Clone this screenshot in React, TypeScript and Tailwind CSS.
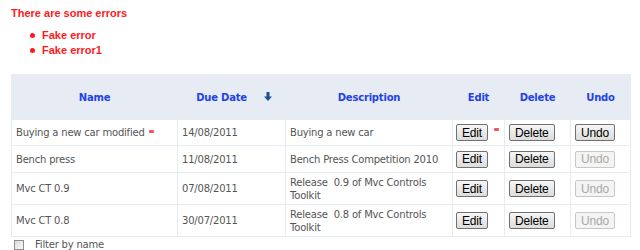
import React from "react";

const btn =
  "h-[17px] rounded-[2px] border border-[#707070] bg-gradient-to-b from-[#f6f6f6] to-[#dcdcdc] text-[12px] leading-[14px] text-black px-[5px] [font-family:'Liberation_Sans',Arial,sans-serif]";
const btnDis =
  "h-[17px] rounded-[2px] border border-[#c8c8c8] bg-[#f4f4f4] text-[12px] leading-[14px] text-[#a8a8a8] px-[5px] [font-family:'Liberation_Sans',Arial,sans-serif]";

const rows = [
  { name: "Buying a new car modified", star: true, date: "14/08/2011", desc: ["Buying a new car"], undo: true, h: "h-[26px]" },
  { name: "Bench press", star: false, date: "11/08/2011", desc: ["Bench Press Competition 2010"], undo: false, h: "h-[27px]" },
  { name: "Mvc CT 0.9", star: false, date: "07/08/2011", desc: ["Release\u00a0 0.9 of Mvc Controls", "Toolkit"], undo: false, h: "h-[32px]" },
  { name: "Mvc CT 0.8", star: false, date: "30/07/2011", desc: ["Release\u00a0 0.8 of Mvc Controls", "Toolkit"], undo: false, h: "h-[32px]" },
];

const cell = "border border-[#e7ecf4]";

function Star({ className }: { className: string }) {
  return (
    <span
      title="*"
      aria-label="*"
      className={"inline-block w-[5px] h-[3px] rounded-[1px] bg-[#ff5060] align-middle " + className}
    />
  );
}

export default function App() {
  return (
    <div className="w-[640px] h-[250px] overflow-hidden bg-white pl-[11px] pt-[6px] [font-family:'DejaVu_Sans',Verdana,sans-serif]">
      <div className="text-[11px] leading-[15px] font-bold text-[#ff1a1a] [font-family:'Liberation_Sans',Tahoma,sans-serif]">
        There are some errors
      </div>
      <ul className="mt-[7px] pl-[19px] text-[11px] leading-[15px] font-bold text-[#ff1a1a] [font-family:'Liberation_Sans',Tahoma,sans-serif]">
        <li className="flex items-center">
          <span className="w-[5px] h-[5px] rounded-full bg-[#ff1a1a] mr-[7px]" />
          Fake error
        </li>
        <li className="flex items-center">
          <span className="w-[5px] h-[5px] rounded-full bg-[#ff1a1a] mr-[7px]" />
          Fake error1
        </li>
      </ul>
      <table className="mt-[16px] w-[619px] border-collapse table-fixed text-[10px] tracking-[-0.2px] text-[#555]">
        <colgroup>
          <col className="w-[166px]" />
          <col className="w-[108px]" />
          <col className="w-[167px]" />
          <col className="w-[52px]" />
          <col className="w-[66px]" />
          <col className="w-[60px]" />
        </colgroup>
        <thead>
          <tr className="h-[45px] bg-[#e7ecf4] text-[#2142e8] font-bold">
            <th className={cell + " text-center"}>Name</th>
            <th className={cell + " text-center"}>
              <span className="inline-flex items-center pl-[5px]">
                Due Date
                <svg width="8" height="9" viewBox="0 0 8 9" className="ml-[17px] mt-[-2px]">
                  <path d="M2.5 0h3v4.5H8L4 9 0 4.5h2.5z" fill="#1f4f93" />
                </svg>
              </span>
            </th>
            <th className={cell + " text-center"}>Description</th>
            <th className={cell + " text-center"}>Edit</th>
            <th className={cell + " text-center"}>Delete</th>
            <th className={cell + " text-center"}>Undo</th>
          </tr>
        </thead>
        <tbody>
          {rows.map((r) => (
            <tr key={r.name} className={r.h}>
              <td className={cell + " pl-[4px] whitespace-nowrap"}>
                {r.name}
                {r.star && <Star className="ml-[4px] relative top-[-2px]" />}
              </td>
              <td className={cell + " pl-[4px]"}>{r.date}</td>
              <td className={cell + " pl-[4px] leading-[13px] whitespace-nowrap"}>
                {r.desc.map((d, i) => (
                  <div key={i}>{d}</div>
                ))}
              </td>
              <td className={cell + " pl-[3px] whitespace-nowrap"}>
                <div className="flex items-center">
                  <button className={btn}>Edit</button>
                  {r.star && <Star className="ml-[6px] relative top-[-3px]" />}
                </div>
              </td>
              <td className={cell + " pl-[4px]"}>
                <button className={btn}>Delete</button>
              </td>
              <td className={cell + " pl-[4px]"}>
                <button className={r.undo ? btn : btnDis}>Undo</button>
              </td>
            </tr>
          ))}
        </tbody>
      </table>
      <div className="flex items-center mt-[2px] text-[10px] leading-[12px] tracking-[-0.2px] text-[#555]">
        <span className="ml-[3px] w-[10px] h-[10px] border border-[#8f8f8f] bg-gradient-to-br from-[#dcdcdc] to-[#f8f8f8]" />
        <span className="ml-[11px]">Filter by name</span>
      </div>
    </div>
  );
}
